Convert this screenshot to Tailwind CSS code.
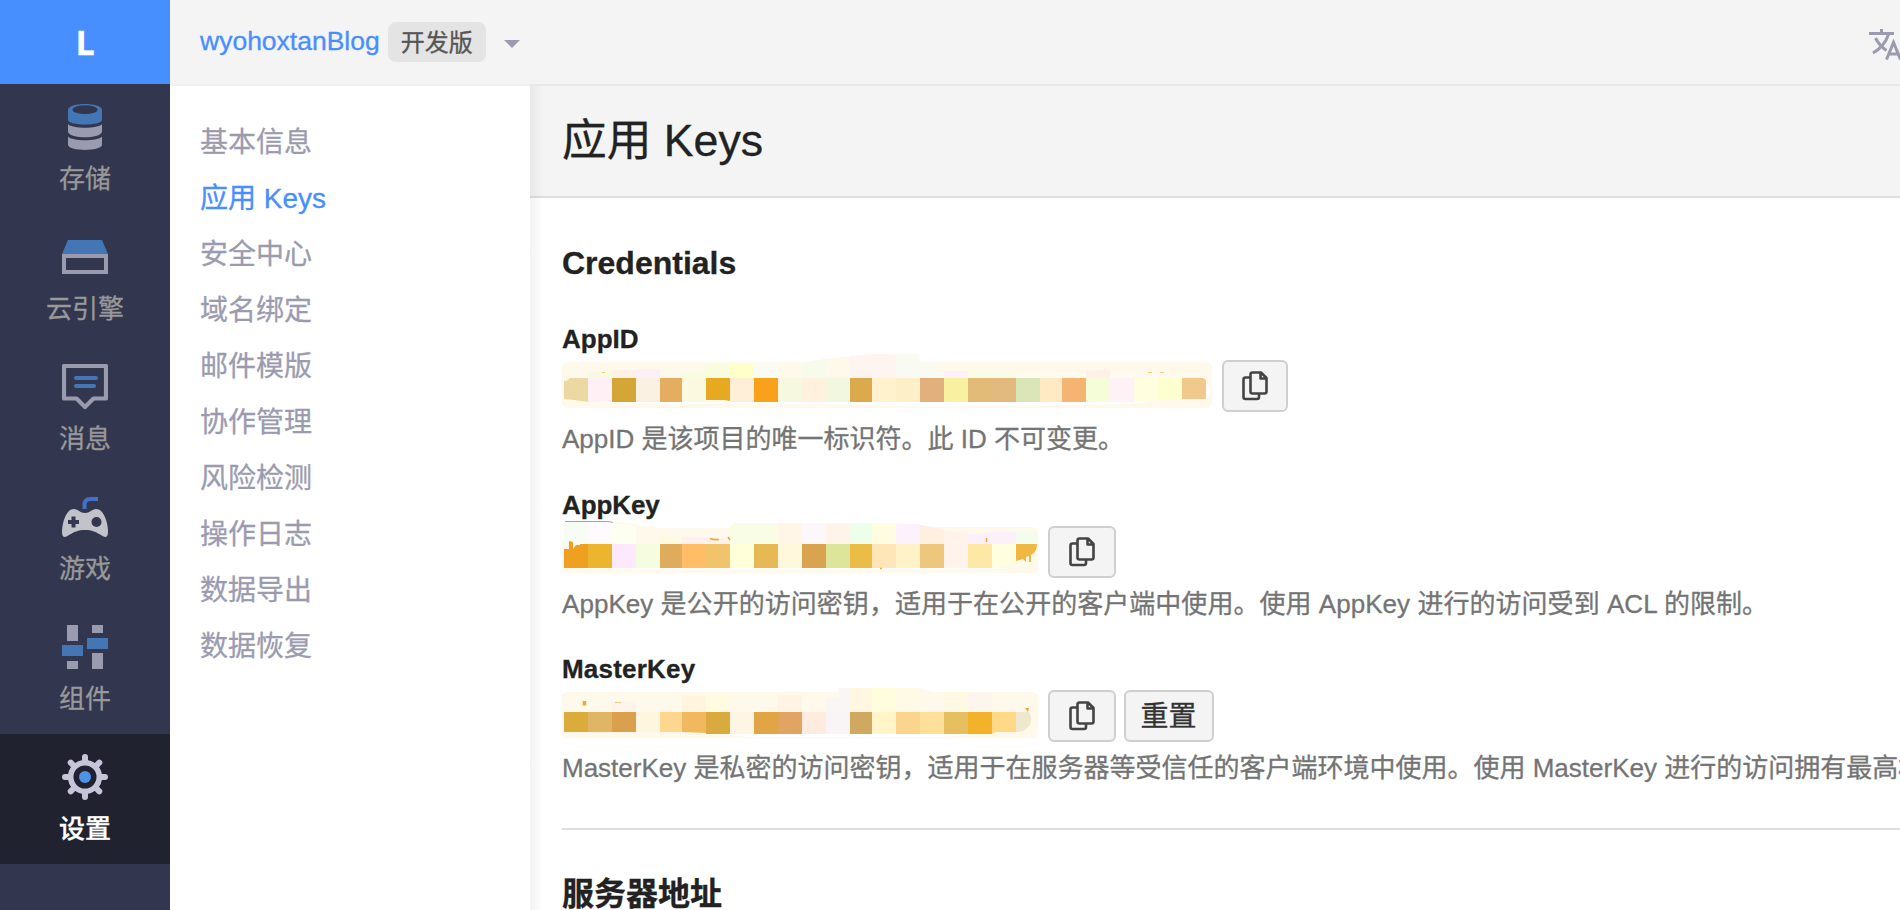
<!DOCTYPE html>
<html lang="zh-CN">
<head>
<meta charset="utf-8">
<title>应用 Keys</title>
<script src="https://cdn.jsdelivr.net/npm/@tailwindcss/browser@4"></script>
</head>
<body class="w-[1900px] h-[910px] overflow-hidden bg-white font-['Liberation_Sans','Noto_Sans_CJK_SC',sans-serif] text-[#222] [-webkit-text-stroke:0.3px]">
<div class="flex h-[910px] w-[1900px] overflow-hidden">

  <!-- product navigation -->
  <nav class="flex w-[170px] shrink-0 flex-col bg-[#32364f] text-[26px] leading-[42px] text-[#999]">
    <div class="flex h-[84px] items-center justify-center bg-[#478eff] font-['Open_Sans',sans-serif] text-[34px] font-bold text-white">L</div>
    <a class="flex h-[130px] flex-col items-center gap-2 pt-5">
      <svg class="size-[46px] shrink-0" viewBox="0 0 46 46">
        <path d="M6 6v10c0 6 34 6 34 0V6C40-2 6-2 6 6z" fill="#4476b6"/>
        <ellipse cx="23" cy="5.7" rx="12.5" ry="4.4" fill="#32364f"/>
        <path d="M6 20c4 5 30 5 34 0v8c-2 7-32 7-34 0zM6 32.500c4 5 30 5 34 0V41c-2 6.500-32 6.500-34 0z" fill="#9b9bb0"/>
      </svg>
      <span>存储</span>
    </a>
    <a class="flex h-[130px] flex-col items-center gap-2 pt-5">
      <svg class="size-[46px] shrink-0" viewBox="0 0 46 46">
        <path d="M6 6h34l6 14H0z" fill="#4476b6"/>
        <path d="M2 22h42v16H2z" fill="none" stroke="#9b9bb0" stroke-width="4"/>
      </svg>
      <span>云引擎</span>
    </a>
    <a class="flex h-[130px] flex-col items-center gap-2 pt-5">
      <svg class="size-[46px] shrink-0" viewBox="0 0 46 46">
        <path d="M2 2h42v32.500H31.500L23 43l-8.500-8.500H2z" fill="none" stroke="#9b9bb0" stroke-width="4.200" stroke-linejoin="round"/>
        <path d="M14 14h20M14 22h18" stroke="#4476b6" stroke-width="4" stroke-linecap="round"/>
      </svg>
      <span>消息</span>
    </a>
    <a class="flex h-[130px] flex-col items-center gap-2 pt-5">
      <svg class="size-[46px] shrink-0" viewBox="0 0 46 46">
        <path d="M22.500 15v-4q0-6 6-6H36" fill="none" stroke="#4272c8" stroke-width="4"/>
        <path d="M12 15c4 0 6 4 11 4s7-4 11-4c8 0 12 14 12 23 0 6-3 6-7 3-5-3-9-5-16-5S12 38 7 41c-4 3-7 3-7-3 0-9 4-23 12-23z" fill="#c2c2cb"/>
        <path d="M11.500 22.500v11M6 28h11" stroke="#32364f" stroke-width="4"/>
        <circle cx="34.500" cy="28" r="5" fill="#32364f"/>
      </svg>
      <span>游戏</span>
    </a>
    <a class="flex h-[130px] flex-col items-center gap-2 pt-5">
      <svg class="size-[46px] shrink-0" viewBox="0 0 46 46">
        <path d="M5 1h11v16H5zM5 37h11v8H5zM30 1h11v8H30zM30 29h11v16H30z" fill="#9b9bb0"/>
        <path d="M0 21h21v11H0zM25 14h21v11H25z" fill="#4476b6"/>
      </svg>
      <span>组件</span>
    </a>
    <a class="flex h-[130px] flex-col items-center gap-2 bg-[#202230] pt-5 font-medium text-white">
      <svg class="size-[46px] shrink-0" viewBox="0 0 46 46">
        <g fill="none" stroke="#c6c4d8">
          <circle cx="23" cy="23" r="14.300" stroke-width="5.600"/>
          <path stroke-width="6" stroke-linecap="round" d="M23 8V3M23 38v5M8 23H3M38 23h5M12 12l-3.300-3.300M34 12l3.300-3.300M12 34l-3.300 3.300M34 34l3.300 3.300"/>
        </g>
        <circle cx="23" cy="23" r="6" fill="#4d92e6"/>
      </svg>
      <span>设置</span>
    </a>
  </nav>

  <div class="flex min-w-0 flex-1 flex-col">
    <!-- top bar -->
    <header class="flex h-[84px] shrink-0 items-center bg-[#f4f4f4] pl-[30px]">
      <a class="pb-0.5 text-[26.5px] leading-10 text-[#478eff]">wyohoxtanBlog</a>
      <span class="ml-2 flex h-10 w-[98px] items-center justify-center rounded-lg bg-[#e4e4e4] pt-0.5 text-[24px] leading-10 text-[#555]">开发版</span>
      <svg class="ml-[18px] mt-1 h-2 w-4" viewBox="0 0 16 8"><path d="M0 0h16L8 8z" fill="#9b9bb0"/></svg>
      <svg class="ml-auto mt-1 h-8 w-8 shrink-0" viewBox="0 0 32 32" fill="none" stroke="#9b9bb0" stroke-width="3">
        <path d="M1 5.500h25M13.500 1v4M20.500 6.500C18 14 12 21 5 25M7.500 10c2.500 5 6 9 11 12.500"/>
        <path d="M18.500 31.500 25.500 14.500 32.500 31.500M21 26h10"/>
      </svg>
    </header>

    <div class="flex min-h-0 flex-1">
      <!-- settings menu -->
      <aside class="flex w-[360px] shrink-0 flex-col border-t-2 border-[#f0f0f0] bg-white pl-[30px] pt-[29px] text-[28px] leading-[56px] text-[#9b9bb0]">
        <a>基本信息</a>
        <a class="text-[#478eff]">应用 Keys</a>
        <a>安全中心</a>
        <a>域名绑定</a>
        <a>邮件模版</a>
        <a>协作管理</a>
        <a>风险检测</a>
        <a>操作日志</a>
        <a>数据导出</a>
        <a>数据恢复</a>
      </aside>

      <main class="relative flex min-w-0 flex-1 flex-col overflow-hidden border-t-2 border-[#e8e8e8]">
        <div class="absolute inset-y-0 left-0 w-3.5 bg-linear-to-r from-black/5 to-transparent"></div>
        <h1 class="h-28 shrink-0 border-b-2 border-[#dedede] bg-[#f4f4f4] pl-8 text-[44.700px] leading-[110px]">应用 Keys</h1>

        <div class="flex flex-col pl-8 whitespace-nowrap">
          <h2 class="mt-[43px] h-11 text-[32px] leading-[44px] font-bold">Credentials</h2>

          <section class="mt-[39px] flex h-[166px] flex-col">
            <h3 class="h-9 text-[26px] leading-[30px] font-bold">AppID</h3>
            <div class="flex h-[52px] gap-2">
              <svg class="h-[52px] w-[652px] shrink-0 overflow-visible" viewBox="562 360 652 52">
                <path d="M568 362H804L860 355Q890 353 916 354q4 0 4 8h286q6 0 6 6v34q0 6-6 6H568q-6 0-6-6v-34q0-6 6-6z" fill="#fff9eb"/>
                <path d="M588 372h22v-2h2v8h-24z" fill="#f5fbe2"/><path d="M612 370h24v8h-24z" fill="#fef2e6"/><path d="M636 369h24v9h-24z" fill="#fdeff7"/>
                <path d="M682 372h22l4-8h22v14h-48z" fill="#f9fde0"/><path d="M730 363h24v15h-24z" fill="#ffffc9"/><path d="M754 363h24v15h-24z" fill="#fafcf3"/>
                <path d="M802 362l24-3v19h-24z" fill="#f7fbec"/><path d="M850 356l22-2h24v24h-46z" fill="#fff5f0"/><path d="M896 354h20q4 0 4 4v20h-24z" fill="#f9faf1"/>
                <path d="M920 363h18v9h6v6h-24z" fill="#f9faf2"/><path d="M944 371h24v7h-24z" fill="#fdf0fb"/><path d="M968 371h48v7h-48z" fill="#fafde5"/><path d="M1016 373h70v5h-70z" fill="#fcfbee"/><path d="M1086 371q12-2 24 0v7h-24z" fill="#fff0e9"/><path d="M1110 373h96v5h-96z" fill="#fefaf0"/>
                <path d="M602 372.500h3M1148 372.500h4M1160 372.500h4" stroke="#f8c877"/>
                <path d="M588 402h140l12 0h240l80 0h90q-16 2-50 2.500l-140 2q-70 1-90-2l-180-.5q-60 0-102-2z" fill="#fff"/>
                <path d="M1204 380q5 4 6 9t-4 9z" fill="#fff"/>
                <g>
                  <path d="M564 381q4 0 6-3h18v24q-12-2-24-3z" fill="#ebd8a2"/><path d="M588 378h24v24h-24z" fill="#fef0f5"/><path d="M612 378h24v24h-24z" fill="#d4a637"/><path d="M636 378h24v24h-24z" fill="#fbf1e3"/><path d="M660 378h22v24h-22z" fill="#e4ad60"/><path d="M682 378h24v24h-24z" fill="#fbfae1"/>
                  <path d="M706 378h24v23l-6-1h-18z" fill="#e7a920"/><path d="M730 378h24v24h-24z" fill="#ffeed8"/><path d="M754 378h24v24h-24z" fill="#f9a11b"/><path d="M778 378h24v24h-24z" fill="#f6f9e0"/><path d="M802 378h24v24h-24z" fill="#fff1de"/><path d="M826 378h24v24h-24z" fill="#f2f8df"/>
                  <path d="M850 378h22v24h-22z" fill="#dcaa4c"/><path d="M872 378h24v24h-24z" fill="#fff2cc"/><path d="M896 378h24v24h-24z" fill="#fdf0c8"/><path d="M920 378h24v24h-24z" fill="#e1b07c"/><path d="M944 378h24v24h-24z" fill="#f9f1a2"/><path d="M968 378h24v24h-24z" fill="#e2bb78"/>
                  <path d="M992 378h24v24h-24z" fill="#e2ba80"/><path d="M1016 378h24v24h-24z" fill="#dae6b8"/><path d="M1040 378h22v24h-22z" fill="#ffeac4"/><path d="M1062 378h24v24h-24z" fill="#f6b472"/><path d="M1086 378h24v24h-24z" fill="#f4fdd8"/><path d="M1110 378h24v24h-24z" fill="#fef2f8"/>
                  <path d="M1134 378h24v22l-12 2h-12z" fill="#ffffe0"/><path d="M1158 378h24v21h-24z" fill="#feffce"/><path d="M1182 378h20q4 0 4 4v17h-24z" fill="#f2c98c"/>
                </g>
              </svg>
              <button class="flex h-[52px] w-[66px] items-center justify-center rounded-md border-2 border-[#cfcfcf] bg-[#f4f4f4] pb-[1px]">
                <svg class="h-[30px] w-[26px]" viewBox="0 0 26 30" fill="none" stroke="#444" stroke-width="2.600" stroke-linejoin="round"><path d="M8 6.500H3.500Q1.500 6.500 1.500 8.500V26q0 2 2 2H15q2 0 2-2v-3.500"/><path d="M10.500 1.500H19l5.500 5.500v13.500q0 2-2 2h-12q-2 0-2-2v-17q0-2 2-2zM18.500 2v5.500H24"/></svg>
              </button>
            </div>
            <p class="mt-[11px] text-[26px] leading-[32px] text-[#747474]">AppID 是该项目的唯一标识符。此 ID 不可变更。</p>
          </section>

          <section class="flex h-[164px] flex-col">
            <h3 class="h-9 text-[26px] leading-[30px] font-bold tracking-[-0.1px]">AppKey</h3>
            <div class="flex h-[52px] gap-2.5">
              <svg class="h-[52px] w-[476px] shrink-0 overflow-visible" viewBox="562 526 476 52">
                <path d="M564 522h48q14 0 30 4l18 2h70q1-5 8-5h130q50 0 66 4h98q6 0 6 6v34q0 6-6 6H568q-6 0-6-6v-26l2-1z" fill="#fff9eb"/>
                <path d="M564 522h24v22h-24z" fill="#f7fcf5"/><path d="M588 522h24v22h-24z" fill="#fffafd"/><path d="M612 523l20 2 4 2v17h-24z" fill="#fdfff0"/><path d="M660 535l22 4v5h-22z" fill="#fcfae0"/><path d="M682 537l24 1 24 1v5h-48z" fill="#fdf1ef"/>
                <path d="M730 528q2-5 8-5h40v21h-48z" fill="#fafde5"/><path d="M778 523h24v21h-24z" fill="#fff6e8"/><path d="M802 523h24v21h-24z" fill="#fcf7fa"/><path d="M826 523h24v21h-24z" fill="#fff4ea"/><path d="M850 523h22v21h-22z" fill="#edfeea"/><path d="M872 523h24v21h-24z" fill="#fffce2"/><path d="M896 524h24v20h-24z" fill="#fcf1fd"/><path d="M920 525l24 4v15h-24z" fill="#ffefe1"/><path d="M944 530l24 4v10h-24z" fill="#fff3ec"/><path d="M968 534q14 0 24-2h24v12h-48z" fill="#fcf1fa"/><path d="M1016 532h18q3 0 3 4v8h-21z" fill="#f3fdee"/>
                <path d="M565 521.500h42q3 0 6 1" fill="none" stroke="#a4a4a4"/>
                <path d="M564 568h48l40 0h360l-20 1.500H620q-30 0-56-1.500z" fill="#fff"/>
                <path d="M564 549h5v-8l4 1v7l3-4h4v-1h8v24h-24z" fill="#f0a020"/><path d="M588 544h24v24h-24z" fill="#edb52e"/><path d="M612 544h24v24h-24z" fill="#fde9fb"/><path d="M636 544h24v24h-24z" fill="#f5fde0"/><path d="M660 544h22v24h-22z" fill="#dfac5d"/><path d="M682 544h24v24h-24z" fill="#ffbe65"/><path d="M706 544h24v24h-24z" fill="#f1c46c"/>
                <path d="M730 544h24v24h-24z" fill="#ffffd8"/><path d="M754 544h24v24h-24z" fill="#e6b955"/><path d="M778 544h24v24h-24z" fill="#fff8dc"/><path d="M802 544h24v24h-24z" fill="#d9a350"/><path d="M826 544h24v24h-24z" fill="#dde59a"/><path d="M850 544h22v24h-22z" fill="#ecbd46"/><path d="M872 544h24v24h-24z" fill="#ffe6b9"/><path d="M896 544h24v24h-24z" fill="#fff2c8"/>
                <path d="M920 544h24v24h-24z" fill="#edc77c"/><path d="M944 544h24v24h-24z" fill="#fff3ec"/><path d="M968 544h24v24h-24z" fill="#fee8a5"/><path d="M992 544h24v19l-24 5z" fill="#ffffdf"/><path d="M1016 544h21q0 8-6 11v7h-2v-6l-3 1v5l-3-3-7 2z" fill="#f0b842"/>
                <path d="M710 538.500q4 1.500 9 1M728 537l2 3M986.500 538v4M880 568.500h2" fill="none" stroke="#eda83c" stroke-width="1.500"/>
              </svg>
              <button class="flex h-[52px] w-[68px] items-center justify-center rounded-md border-2 border-[#cfcfcf] bg-[#f4f4f4] pb-[1px]">
                <svg class="h-[30px] w-[26px]" viewBox="0 0 26 30" fill="none" stroke="#444" stroke-width="2.600" stroke-linejoin="round"><path d="M8 6.500H3.500Q1.500 6.500 1.500 8.500V26q0 2 2 2H15q2 0 2-2v-3.500"/><path d="M10.500 1.500H19l5.500 5.500v13.500q0 2-2 2h-12q-2 0-2-2v-17q0-2 2-2zM18.500 2v5.500H24"/></svg>
              </button>
            </div>
            <p class="mt-2.5 text-[26px] leading-[32px] tracking-[0.04px] text-[#747474]">AppKey 是公开的访问密钥，适用于在公开的客户端中使用。使用 AppKey 进行的访问受到 ACL 的限制。</p>
          </section>

          <section class="flex h-[174px] flex-col">
            <h3 class="h-9 text-[26px] leading-[30px] font-bold tracking-[0.2px]">MasterKey</h3>
            <div class="flex h-[52px]">
              <svg class="h-[52px] w-[476px] shrink-0 overflow-visible" viewBox="562 690 476 52">
                <path d="M568 692h270l4-4h76q8 2 14 4h100q6 0 6 6v34q0 6-6 6H568q-6 0-6-6v-34q0-6 6-6z" fill="#fff9eb"/>
                <path d="M612 703l12-2h12v11h-24z" fill="#fff4ec"/><path d="M682 696h24v16h-24z" fill="#fff5de"/><path d="M706 696h24v16h-24z" fill="#fffbe0"/><path d="M778 695h24v17h-24z" fill="#fff4e3"/><path d="M826 698h12v-10h12v24h-24z" fill="#fbf6f6"/><path d="M850 688h22v24h-22z" fill="#fff7e0"/><path d="M872 688h24v24h-24z" fill="#fffddd"/><path d="M896 688h22l2 2v22h-24z" fill="#fffae6"/><path d="M944 692h24v20h-24z" fill="#fff8e2"/><path d="M968 693h24v19h-24z" fill="#fdf6ef"/>
                <path d="M584.500 701v4.500" stroke="#f2a733" stroke-width="3.500"/><path d="M615 702.500h6" stroke="#f6c684"/>
                <path d="M700 733h284q-20 2-42 4H746q-20-3-46-4z" fill="#fff"/>
                <path d="M564 712h24v20h-24z" fill="#dbab3c"/><path d="M588 712h24v20h-24z" fill="#e0b565"/><path d="M612 712h24v20h-24z" fill="#dba04e"/><path d="M636 712h24v20h-24z" fill="#fff6df"/><path d="M660 712h22v20h-22z" fill="#fed68e"/><path d="M682 712h24v21l-24-1z" fill="#f1b860"/><path d="M706 712h24v22h-24z" fill="#d9ab3f"/>
                <path d="M730 712h24v22h-24z" fill="#fff5e4"/><path d="M754 712h24v22h-24z" fill="#e2a545"/><path d="M778 712h24v22h-24z" fill="#e0a563"/><path d="M802 712h24v22h-24z" fill="#ffecdf"/><path d="M826 712h24v22h-24z" fill="#f9f5f7"/><path d="M850 712h22v22h-22z" fill="#d1a85f"/><path d="M872 712h24v22h-24z" fill="#fff5c9"/><path d="M896 712h24v22h-24z" fill="#fdd48e"/>
                <path d="M920 712h24v22h-24z" fill="#fee09a"/><path d="M944 712h24v22h-24z" fill="#e6c060"/><path d="M968 712h24v22h-24z" fill="#f2b32a"/><path d="M992 712h24v20h-20l-4 2z" fill="#ffd888"/><path d="M1016 712h13q5 9-1 15-4 5-12 5z" fill="#efe8cd"/>
                <path d="M1025 708h4l-1 4z" fill="#e8a83a"/>
              </svg>
              <button class="ml-2.5 flex h-[52px] w-[68px] items-center justify-center rounded-md border-2 border-[#cfcfcf] bg-[#f4f4f4] pb-[1px]">
                <svg class="h-[30px] w-[26px]" viewBox="0 0 26 30" fill="none" stroke="#444" stroke-width="2.600" stroke-linejoin="round"><path d="M8 6.500H3.500Q1.500 6.500 1.500 8.500V26q0 2 2 2H15q2 0 2-2v-3.500"/><path d="M10.500 1.500H19l5.500 5.500v13.500q0 2-2 2h-12q-2 0-2-2v-17q0-2 2-2zM18.500 2v5.500H24"/></svg>
              </button>
              <button class="ml-2 flex h-[52px] w-[90px] items-center justify-center rounded-md border-2 border-[#cfcfcf] bg-[#f4f4f4] pt-0.5 pr-px text-[28px] leading-[48px] text-[#333]">重置</button>
            </div>
            <p class="mt-2.5 text-[26px] leading-[32px] text-[#747474]">MasterKey 是私密的访问密钥，适用于在服务器等受信任的客户端环境中使用。使用 MasterKey 进行的访问拥有最高权限。</p>
          </section>

          <div class="h-0.5 bg-[#dedede]"></div>
          <h2 class="mt-[42px] text-[32px] leading-[44px] font-bold">服务器地址</h2>
        </div>
      </main>
    </div>
  </div>
</div>
</body>
</html>
